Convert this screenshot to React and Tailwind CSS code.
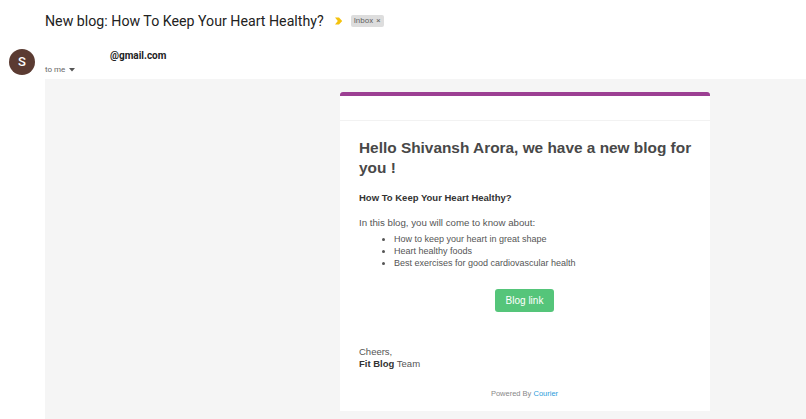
import React from 'react';

const arial = { fontFamily: '"Liberation Sans", Arial, sans-serif' };

function ImportantMarker() {
  return (
    <svg width="8" height="8" viewBox="0 0 10 9" className="ml-[11px]">
      <path d="M0 0 H5 L9 4.5 L5 9 H0 L3.5 4.5 Z" fill="#f4c20d" />
    </svg>
  );
}

export default function App() {
  return (
    <div className="w-[806px] h-[419px] overflow-hidden bg-white" style={{ fontFamily: 'Roboto, "Liberation Sans", sans-serif' }}>
      {/* subject line */}
      <div className="flex items-center pl-[45px] pt-[9px] h-[32px]">
        <h1 className="text-[14.2px] text-[#222] leading-[22px]" style={{ fontFamily: 'Roboto, "Open Sans", sans-serif' }}>
          New blog: How To Keep Your Heart Healthy?
        </h1>
        <ImportantMarker />
        <span className="ml-[8px] px-[3px] rounded-[2px] bg-[#dddddd] text-[#666] text-[8px] leading-[12px] flex items-center gap-[3px]">
          Inbox <span className="text-[8px]">×</span>
        </span>
      </div>

      {/* sender row */}
      <div className="flex pl-[9px] pt-[17px] h-[47px]">
        <div className="w-[26px] h-[26px] rounded-full bg-[#5b3b32] text-white text-[13px] font-medium flex items-center justify-center">
          S
        </div>
        <div className="ml-[10px]">
          <div className="text-[10px] font-bold text-[#222] leading-[14px] pl-[65px]">@gmail.com</div>
          <div className="flex items-center text-[8px] text-[#666] leading-[12px] mt-[1px]">
            to me
            <svg width="6" height="4" viewBox="0 0 6 4" className="ml-[4px]">
              <path d="M0 0 H6 L3 3.5 Z" fill="#555" />
            </svg>
          </div>
        </div>
      </div>

      {/* message body */}
      <div className="ml-[45px] h-[340px] bg-[#f5f5f5] pt-[13px] pl-[295px]">
        <div className="w-[370px] h-[319px] bg-white" style={arial}>
          <div className="h-[4px] bg-[#9c3f93] rounded-t-[3px]" />
          <div className="h-[25px] border-b border-[#f2f2f2]" />
          <div className="pl-[19px] pr-[12px] pt-[17px] text-[#444]">
            <h2 className="text-[15.4px] font-bold leading-[20px] text-[#484848]">
              Hello Shivansh Arora, we have a new blog for you !
            </h2>
            <p className="mt-[14px] text-[9.5px] font-bold leading-[12px] text-[#333]">How To Keep Your Heart Healthy?</p>
            <p className="mt-[13px] text-[9.7px] leading-[12px] text-[#555]">In this blog, you will come to know about:</p>
            <ul className="mt-[4px] pl-[35px] text-[9px] leading-[12px] text-[#555] list-disc">
              <li>How to keep your heart in great shape</li>
              <li>Heart healthy foods</li>
              <li>Best exercises for good cardiovascular health</li>
            </ul>
            <div className="flex justify-center mt-[20px] pr-[8px]">
              <div className="w-[59px] h-[23px] rounded-[3px] bg-[#55c57a] text-white text-[10px] flex items-center justify-center">
                Blog link
              </div>
            </div>
            <div className="mt-[34px] text-[9.5px] leading-[12px] text-[#555]">
              <div>Cheers,</div>
              <div><span className="font-bold text-[#333]">Fit Blog</span> Team</div>
            </div>
            <div className="mt-[18px] text-center text-[7.5px] text-[#888] pr-[8px]">
              Powered By <span className="text-[#2d9cdb]">Courier</span>
            </div>
          </div>
        </div>
      </div>
    </div>
  );
}
